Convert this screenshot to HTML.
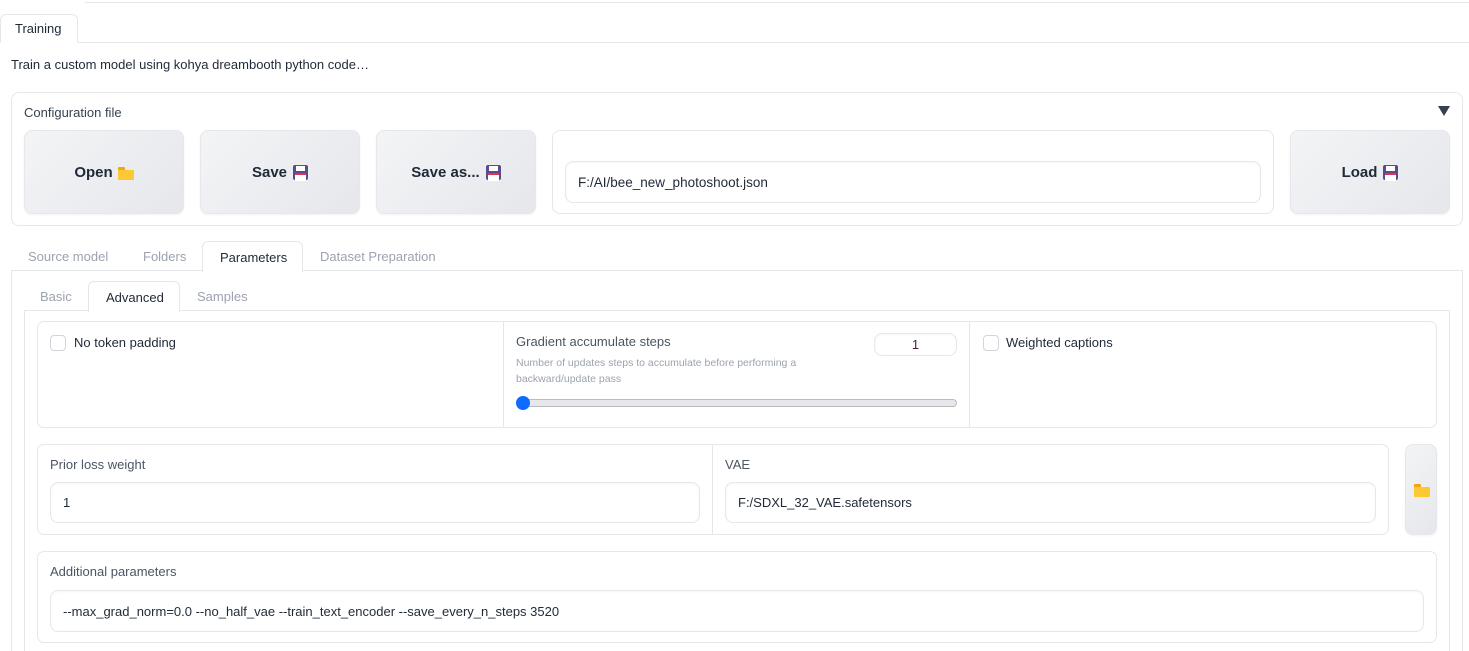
<!DOCTYPE html>
<html><head><meta charset="utf-8"><style>
*{box-sizing:border-box;margin:0;padding:0}
html,body{width:1469px;height:651px;overflow:hidden}
body{background:#fff;font-family:"Liberation Sans",sans-serif;font-size:13.5px;color:#374151;position:relative}
.a{position:absolute}
.bd{border:1px solid #e5e7eb}
.btn{position:absolute;border-radius:8px;background:linear-gradient(135deg,#f3f4f6,#e5e7eb);border:1px solid #e5e7eb;display:flex;align-items:center;justify-content:center;font-weight:bold;font-size:15px;color:#1f2937;box-shadow:0 1px 2px rgba(0,0,0,.05)}
.inp{position:absolute;border:1px solid #e5e7eb;border-radius:8px;background:#fff;display:flex;align-items:center;padding-left:12px;font-size:13.5px;color:#1f2937;box-shadow:inset 0 1px 2px rgba(0,0,0,.04)}
.lbl{position:absolute;font-size:13.5px;color:#4b5563}
.tab{position:absolute;font-size:13.5px;color:#9ca3af}
.cb{position:absolute;width:16px;height:16px;border:1px solid #d1d5db;border-radius:4px;background:#fff}
.fl{display:inline-block;width:16px;height:13px;margin-left:5px;position:relative;top:1px}
.fl:before{content:"";position:absolute;left:0;top:0;width:7px;height:4px;background:#f2a51a;border-radius:1px 1px 0 0}
.fl:after{content:"";position:absolute;left:0;top:3px;width:16px;height:10px;background:#fcc934;border-radius:1px}
.fd{display:inline-block;width:15px;height:15px;background:#5c4a8f;border-radius:2px;margin-left:6px;position:relative}
.fd:before{content:"";position:absolute;left:3px;top:1px;width:9px;height:5px;background:#fff}
.fd:after{content:"";position:absolute;left:2px;top:8px;width:11px;height:6px;background:#fff;border-top:2px solid #e0334a}
</style></head><body>
<div class="a" style="left:85px;top:0;width:1384px;height:3px;border-bottom:1px solid #e5e7eb"></div>
<div class="a" style="left:0;top:42px;width:1469px;border-top:1px solid #e5e7eb"></div>
<div class="a" style="left:0;top:14px;width:78px;height:29px;border:1px solid #e5e7eb;border-bottom:none;border-radius:6px 6px 0 0;background:#fff;padding:6px 0 0 14px;color:#1f2937;font-size:13px">Training</div>
<div class="a" style="left:11px;top:57px;color:#1f2937;font-size:13px">Train a custom model using kohya dreambooth python code…</div>

<div class="a bd" style="left:11px;top:92px;width:1452px;height:134px;border-radius:8px"></div>
<div class="lbl" style="left:24px;top:105px;color:#374151;font-size:13px">Configuration file</div>
<div class="a" style="left:1438px;top:106px;width:0;height:0;border-left:6px solid transparent;border-right:6px solid transparent;border-top:10px solid #374151"></div>
<div class="btn" style="left:24px;top:130px;width:160px;height:84px">Open<span class="fl"></span></div>
<div class="btn" style="left:200px;top:130px;width:160px;height:84px">Save<span class="fd"></span></div>
<div class="btn" style="left:376px;top:130px;width:160px;height:84px">Save as...<span class="fd"></span></div>
<div class="a bd" style="left:552px;top:130px;width:722px;height:84px;border-radius:8px"></div>
<div class="inp" style="left:565px;top:161px;width:696px;height:42px">F:/AI/bee_new_photoshoot.json</div>
<div class="btn" style="left:1290px;top:130px;width:160px;height:84px">Load<span class="fd"></span></div>

<div class="a" style="left:11px;top:270px;width:1452px;height:381px;border:1px solid #e5e7eb;border-bottom:none"></div>
<div class="tab" style="left:28px;top:249px;font-size:13px">Source model</div>
<div class="tab" style="left:143px;top:249px;font-size:13px">Folders</div>
<div class="a" style="left:202px;top:241px;width:101px;height:31px;border:1px solid #e5e7eb;border-bottom:none;border-radius:6px 6px 0 0;background:#fff;padding:8px 0 0 17px;color:#1f2937;font-size:13px">Parameters</div>
<div class="tab" style="left:320px;top:249px;font-size:13px">Dataset Preparation</div>

<div class="a" style="left:24px;top:310px;width:1426px;height:341px;border:1px solid #e5e7eb;border-bottom:none"></div>
<div class="tab" style="left:40px;top:289px;font-size:13px">Basic</div>
<div class="a" style="left:88px;top:281px;width:92px;height:31px;border:1px solid #e5e7eb;border-bottom:none;border-radius:6px 6px 0 0;background:#fff;padding:8px 0 0 17px;color:#1f2937;font-size:13px">Advanced</div>
<div class="tab" style="left:197px;top:289px;font-size:13px">Samples</div>

<div class="a bd" style="left:37px;top:321px;width:1400px;height:107px;border-radius:7px"></div>
<div class="a" style="left:503px;top:322px;height:105px;border-left:1px solid #e5e7eb"></div>
<div class="a" style="left:969px;top:322px;height:105px;border-left:1px solid #e5e7eb"></div>
<div class="cb" style="left:50px;top:335px"></div>
<div class="a" style="left:74px;top:335px;color:#1f2937;font-size:13px">No token padding</div>
<div class="lbl" style="left:516px;top:334px;font-size:13px">Gradient accumulate steps</div>
<div class="a" style="left:516px;top:355px;font-size:10.5px;color:#9ca3af;line-height:16px;width:320px">Number of updates steps to accumulate before performing a backward/update pass</div>
<div class="inp" style="left:874px;top:333px;width:83px;height:23px;justify-content:center;padding:0;color:#4b1d3f;font-size:13px">1</div>
<div class="a" style="left:517px;top:399px;width:440px;height:8px;border:1px solid #bbb;border-radius:4px;background:#e5e7eb"></div>
<div class="a" style="left:516px;top:396px;width:14px;height:14px;border-radius:50%;background:#0b6cff"></div>
<div class="cb" style="left:983px;top:335px"></div>
<div class="a" style="left:1006px;top:335px;color:#1f2937;font-size:13px">Weighted captions</div>

<div class="a bd" style="left:37px;top:444px;width:1352px;height:91px;border-radius:7px"></div>
<div class="a" style="left:712px;top:445px;height:89px;border-left:1px solid #e5e7eb"></div>
<div class="lbl" style="left:50px;top:457px;font-size:13px">Prior loss weight</div>
<div class="inp" style="left:50px;top:482px;width:650px;height:41px;font-size:13px">1</div>
<div class="lbl" style="left:725px;top:457px;font-size:13px">VAE</div>
<div class="inp" style="left:725px;top:482px;width:651px;height:41px;font-size:13px">F:/SDXL_32_VAE.safetensors</div>
<div class="btn" style="left:1405px;top:444px;width:32px;height:91px"><span class="fl" style="margin:0;width:15px"></span></div>

<div class="a bd" style="left:37px;top:551px;width:1400px;height:92px;border-radius:7px"></div>
<div class="lbl" style="left:50px;top:564px;font-size:13px">Additional parameters</div>
<div class="inp" style="left:50px;top:590px;width:1374px;height:42px;font-size:13px">--max_grad_norm=0.0 --no_half_vae --train_text_encoder --save_every_n_steps 3520</div>
</body></html>
